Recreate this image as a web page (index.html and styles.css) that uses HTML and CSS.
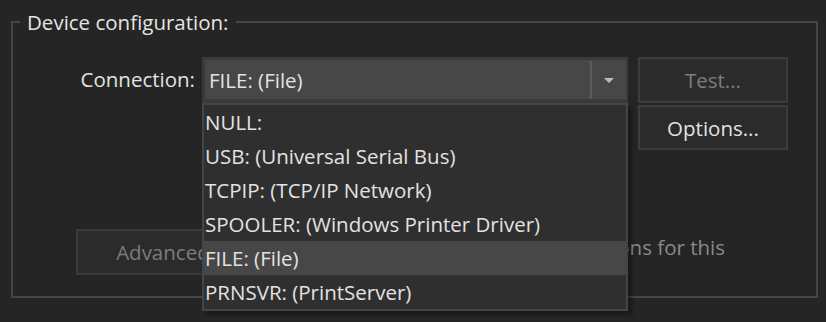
FILE: index.html
```html
<!DOCTYPE html>
<html>
<head>
<meta charset="utf-8">
<link rel="stylesheet" href="styles.css">
</head>
<body>
<fieldset class="group">
  <legend class="group-title">Device configuration:</legend>
  <div class="grid">
    <label class="conn-label">Connection:</label>
    <div class="combo">
      <div class="combo-field">
        <span class="combo-value">FILE: (File)</span>
        <span class="combo-divider"></span>
        <span class="combo-arrow"></span>
      </div>
      <ul class="dropdown">
        <li class="item">NULL:</li>
        <li class="item">USB: (Universal Serial Bus)</li>
        <li class="item">TCPIP: (TCP/IP Network)</li>
        <li class="item">SPOOLER: (Windows Printer Driver)</li>
        <li class="item selected">FILE: (File)</li>
        <li class="item">PRNSVR: (PrintServer)</li>
      </ul>
    </div>
    <button class="btn disabled btn-test">Test...</button>
    <button class="btn btn-options">Options...</button>
  </div>
  <div class="advanced-row">
    <button class="btn disabled btn-adv">Advanced...</button>
    <span class="adv-note">Configure the advanced options for this</span>
  </div>
</fieldset>
</body>
</html>
```

FILE: styles.css
```css
html, body {
  margin: 0;
  padding: 0;
  background: #252525;
  width: 826px;
  height: 322px;
  overflow: hidden;
}
body {
  font-family: "Open Sans", "Noto Sans", sans-serif;
  font-size: 20.5px;
  color: #e2e2e2;
  padding: 12px 0 0 11px;
  box-sizing: border-box;
}
.group {
  box-sizing: border-box;
  width: 807px;
  height: 286px;
  margin: 0;
  border: 2px solid #454545;
  padding: 0;
  position: relative;
}
.group-title {
  padding: 0 7px;
  margin-left: 7px;
  line-height: 20px;
  color: #e4e4e4;
}
.grid {
  display: grid;
  grid-template-columns: 189px 426px 160px;
  grid-template-rows: 46px 46px;
  row-gap: 2px;
  margin-top: 25px;
}
.conn-label {
  text-align: right;
  padding-right: 7px;
  line-height: 44px;
}
.combo {
  position: relative;
}
.combo-field {
  box-sizing: border-box;
  height: 46px;
  border: 3px solid #3a3a3a;
  border-right-width: 2px;
  border-bottom-width: 4px;
  background: #474747;
  display: flex;
  align-items: center;
}
.combo-value {
  flex: 1;
  padding-left: 4px;
  padding-top: 1px;
}
.combo-divider {
  width: 2px;
  align-self: stretch;
  margin: 1px 0 0;
  background: #5b5b5b;
}
.combo-arrow {
  width: 34px;
  display: flex;
  justify-content: center;
}
.combo-arrow::before {
  content: "";
  border-left: 5px solid transparent;
  border-right: 5px solid transparent;
  border-top: 5px solid #bdbdbd;
  margin-top: 2px;
}
.dropdown {
  position: absolute;
  left: 0;
  top: 46px;
  width: 426px;
  box-sizing: border-box;
  margin: 0;
  padding: 0;
  list-style: none;
  background: #2f2f2f;
  border: 2px solid #454545;
  box-shadow: 4px 4px 4px rgba(0, 0, 0, 0.35);
  z-index: 10;
}
.item {
  height: 34px;
  line-height: 34px;
  padding-left: 1px;
  white-space: nowrap;
}
.item.selected {
  background: #474747;
}
.btn {
  font: inherit;
  color: #e2e2e2;
  background: #2b2b2b;
  border: 2px solid #3c3c3c;
  padding: 0;
  margin: 0;
  height: 46px;
}
.btn.disabled {
  color: #7c7c7c;
}
.btn-test {
  grid-column: 3;
  grid-row: 1;
  margin-left: 10px;
}
.btn-options {
  grid-column: 3;
  grid-row: 2;
  height: 45px;
  margin-left: 10px;
}
.advanced-row {
  display: flex;
  align-items: flex-start;
  margin-top: 78px;
  padding-left: 63px;
}
.btn-adv {
  width: 190px;
  flex-shrink: 0;
}
.adv-note {
  width: 447px;
  margin-left: 12px;
  text-align: right;
  padding-top: 4px;
  color: #8a8a8a;
  white-space: nowrap;
  overflow: hidden;
}
```
